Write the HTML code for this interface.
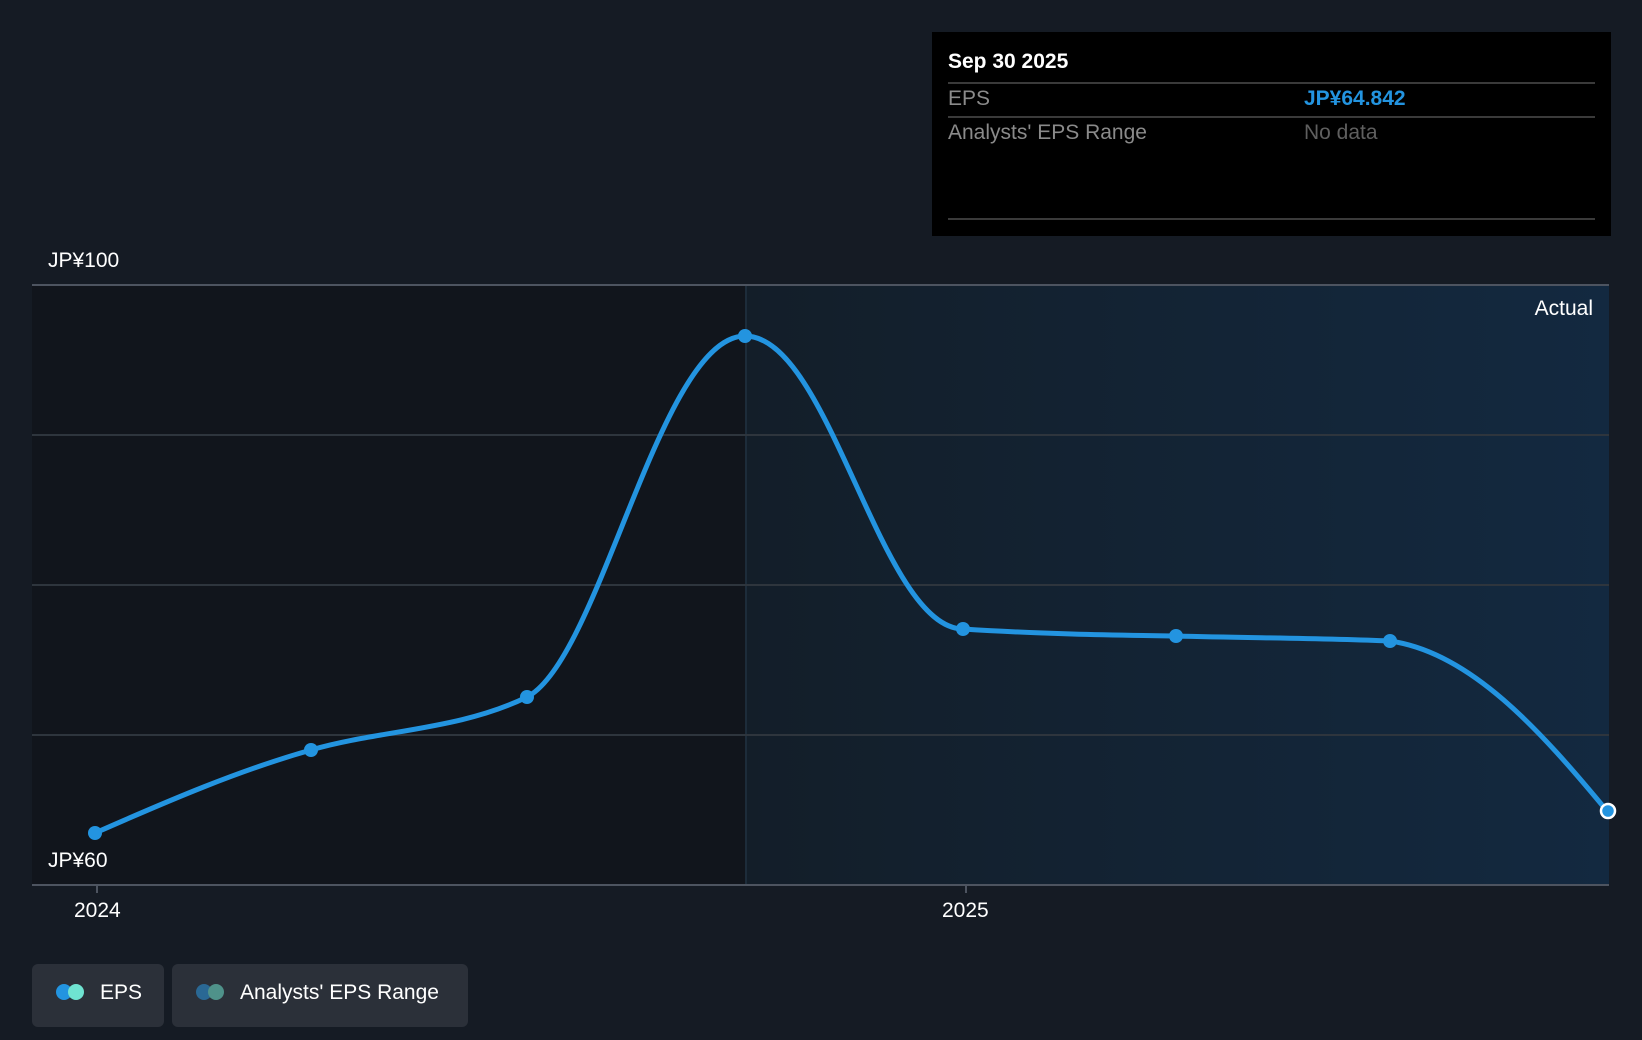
<!DOCTYPE html>
<html><head><meta charset="utf-8"><style>
body{margin:0;width:1642px;height:1040px;background:#151b24;overflow:hidden;font-family:"Liberation Sans",sans-serif;position:relative}
.t{position:absolute;white-space:nowrap}
</style></head><body>
<svg width="1642" height="1040" style="position:absolute;left:0;top:0">
<defs><linearGradient id="g" x1="0" x2="1" y1="0" y2="0"><stop offset="0" stop-color="#131e29"/><stop offset="1" stop-color="#132940"/></linearGradient></defs>
<rect x="32" y="285" width="714" height="600" fill="#11151c"/>
<rect x="746" y="285" width="863" height="600" fill="url(#g)"/>
<line x1="746" y1="285" x2="746" y2="885" stroke="#1d2c3a" stroke-width="2"/>
<g stroke="#2e353d" stroke-width="2"><line x1="32" y1="435" x2="1609" y2="435"/><line x1="32" y1="585" x2="1609" y2="585"/><line x1="32" y1="735" x2="1609" y2="735"/></g>
<line x1="32" y1="285" x2="1609" y2="285" stroke="#4d5460" stroke-width="2"/>
<line x1="32" y1="885" x2="1609" y2="885" stroke="#4d5460" stroke-width="2"/>
<line x1="97" y1="885" x2="97" y2="893" stroke="#4d5460" stroke-width="2"/>
<line x1="966" y1="885" x2="966" y2="893" stroke="#4d5460" stroke-width="2"/>
<path d="M95,833 C170,800 240,770 311,750 C380,730 460,730 527,697 C600,660 660,336 745,336 C830,336 880,628 963,629 C1040,634 1110,635 1176,636 C1250,638 1320,638 1390,641 C1470,652 1540,730 1607,811" fill="none" stroke="#2394e0" stroke-width="5"/>
<g fill="#2394e0"><circle cx="95" cy="833" r="7"/><circle cx="311" cy="750" r="7"/><circle cx="527" cy="697" r="7"/><circle cx="745" cy="336" r="7"/><circle cx="963" cy="629" r="7"/><circle cx="1176" cy="636" r="7"/><circle cx="1390" cy="641" r="7"/></g>
<circle cx="1608" cy="811" r="7" fill="#2394e0" stroke="#fff" stroke-width="2.5"/>
</svg>
<div class="t" style="left:48px;top:249px;font-size:21px;color:#fff">JP¥100</div>
<div class="t" style="left:48px;top:849px;font-size:21px;color:#fff">JP¥60</div>
<div class="t" style="right:49px;top:297px;font-size:21px;color:#fff">Actual</div>
<div class="t" style="left:74px;top:899px;font-size:21px;color:#fff">2024</div>
<div class="t" style="left:942px;top:899px;font-size:21px;color:#fff">2025</div>
<div style="position:absolute;left:932px;top:32px;width:679px;height:204px;background:#000">
<div class="t" style="left:16px;top:18px;font-size:21px;color:#fff;font-weight:bold">Sep 30 2025</div>
<div style="position:absolute;left:16px;right:16px;top:50px;height:2px;background:#3a3a3a"></div>
<div class="t" style="left:16px;top:55px;font-size:21px;color:#8a8a8a">EPS</div>
<div class="t" style="left:372px;top:55px;font-size:21px;color:#2394e0;font-weight:bold">JP¥64.842</div>
<div style="position:absolute;left:16px;right:16px;top:84px;height:2px;background:#3a3a3a"></div>
<div class="t" style="left:16px;top:89px;font-size:21px;color:#8a8a8a">Analysts' EPS Range</div>
<div class="t" style="left:372px;top:89px;font-size:21px;color:#5f5f5f">No data</div>
<div style="position:absolute;left:16px;right:16px;top:186px;height:2px;background:#3a3a3a"></div>
</div>
<div style="position:absolute;left:32px;top:964px;width:132px;height:63px;background:#2b3039;border-radius:6px"></div>
<div style="position:absolute;left:172px;top:964px;width:296px;height:63px;background:#2b3039;border-radius:6px"></div>
<svg width="1642" height="1040" style="position:absolute;left:0;top:0"><circle cx="64" cy="992" r="8" fill="#2394e0"/><circle cx="76" cy="992" r="8" fill="#6fe3d1"/><circle cx="204" cy="992" r="8" fill="#2a6894"/><circle cx="216" cy="992" r="8" fill="#4f928a"/></svg>
<div class="t" style="left:100px;top:981px;font-size:21px;color:#fff">EPS</div>
<div class="t" style="left:240px;top:981px;font-size:21px;color:#fff">Analysts' EPS Range</div>
</body></html>
